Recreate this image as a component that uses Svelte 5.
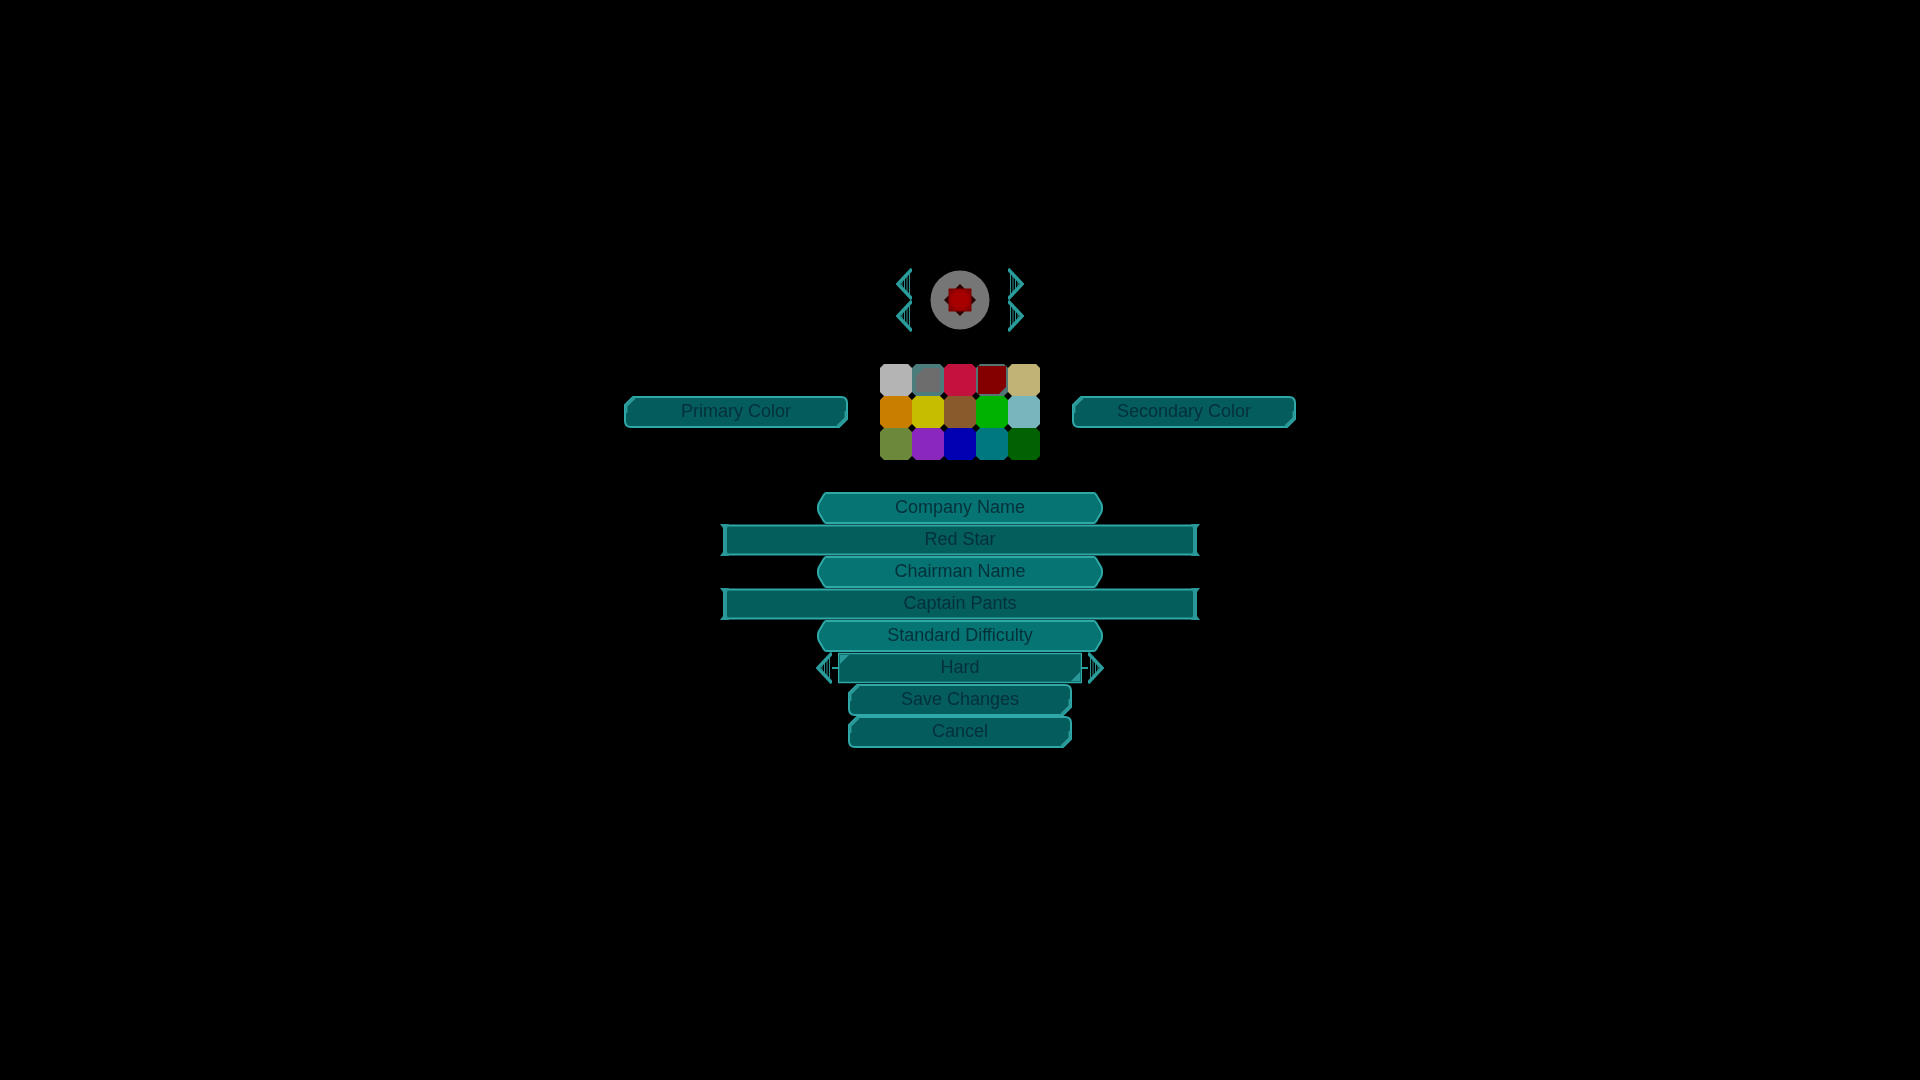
<script>
  const swatches = [
    { c: '#b4b4b4' }, { c: '#6d6d6d', sel: 'a' }, { c: '#c3123e' }, { c: '#840000', sel: 'b' }, { c: '#c0b375' },
    { c: '#c97e00' }, { c: '#c6bd00' }, { c: '#895a2b' }, { c: '#00b200' }, { c: '#78b6be' },
    { c: '#6b883b' }, { c: '#8a27bd' }, { c: '#0000b2' }, { c: '#007880' }, { c: '#006200' }
  ];
  const rows = [
    { kind: 'head', text: 'Company Name' },
    { kind: 'field', text: 'Red Star' },
    { kind: 'head', text: 'Chairman Name' },
    { kind: 'field', text: 'Captain Pants' },
    { kind: 'head', text: 'Standard Difficulty' },
    { kind: 'hard', text: 'Hard' },
    { kind: 'tab', text: 'Save Changes' },
    { kind: 'tab', text: 'Cancel' }
  ];
</script>

{#snippet chevron(dir)}
  <svg class="chev" width="16" height="32" viewBox="0 0 16 32">
    <g transform={dir === 'r' ? 'matrix(-1 0 0 1 16 0)' : undefined}>
      <path class="chev-in" d="M6 14 V18 M8.500 11 V21 M11 8 V24 M13.500 5.500 V26.500" />
      <path class="chev-out" d="M16 1 L2 16 L16 31" />
    </g>
  </svg>
{/snippet}

{#snippet plate(kind)}
  {#if kind === 'tab'}
    <svg class="plate" width="224" height="32" viewBox="0 0 224 32">
      <path class="fill-tab line" d="M1 9 L9 1 H217 Q223 1 223 7 V23 L215 31 H7 Q1 31 1 25 Z" />
      <path class="cap" d="M1 9 L9 1 H13 L3.500 10.500 V17 H1 Z M223 23 L215 31 H211 L220.500 21.500 V15 H223 Z" />
    </svg>
  {:else if kind === 'head'}
    <svg class="plate" width="286" height="32" viewBox="0 0 286 32">
      <path class="fill-head line" d="M9.500 1 H276.500 Q278 1 279 2.500 L284 11 Q285 13 285 15 V17 Q285 19 284 21 L279 29.500 Q278 31 276.500 31 H9.500 Q8 31 7 29.500 L2 21 Q1 19 1 17 V15 Q1 13 2 11 L7 2.500 Q8 1 9.500 1 Z" />
    </svg>
  {:else if kind === 'field'}
    <svg class="plate" width="480" height="32" viewBox="0 0 480 32">
      <path class="fill-field line-thin" d="M5 1.500 H475 V30.500 H5 Z" />
      <path class="cap" d="M0 0 H9 L7 4 V28 L9 32 H0 L3 28 V4 Z M480 0 H471 L473 4 V28 L471 32 H480 L477 28 V4 Z" />
    </svg>
  {:else}
    <svg class="plate" width="244" height="32" viewBox="0 0 244 32">
      <path class="fill-field line-hair" d="M0.500 1.500 H243.500 V30.500 H0.500 Z" />
      <path class="cap" d="M2 3 H11 L2 12 Z M242 29 H233 L242 20 Z" />
    </svg>
  {/if}
{/snippet}

<main class="stage">
  <section class="logo-row">
    <div class="chev-stack">{@render chevron('l')}{@render chevron('l')}</div>
    <svg class="logo" width="60" height="60" viewBox="0 0 60 60">
      <defs>
        <radialGradient id="star" cx="50%" cy="50%" r="60%">
          <stop offset="0.55" stop-color="#a80000" />
          <stop offset="1" stop-color="#7c0000" />
        </radialGradient>
      </defs>
      <circle cx="30" cy="30" r="29.500" fill="#767676" />
      <path d="M30 14 L46 30 L30 46 L14 30 Z" fill="#2a0000" />
      <rect x="18.500" y="18.500" width="23" height="23" fill="url(#star)" />
    </svg>
    <div class="chev-stack">{@render chevron('r')}{@render chevron('r')}</div>
  </section>

  <section class="color-row">
    <div class="btn tab">{@render plate('tab')}<span>Primary Color</span></div>
    <div class="grid">
      {#each swatches as s}
        {#if s.sel}
          <div class="swatch ring {s.sel}">
            <div class="swatch-in {s.sel}" style="background:{s.c}"></div>
          </div>
        {:else}
          <div class="swatch" style="background:{s.c}"></div>
        {/if}
      {/each}
    </div>
    <div class="btn tab">{@render plate('tab')}<span>Secondary Color</span></div>
  </section>

  <section class="stack">
    {#each rows as r}
      {#if r.kind === 'hard'}
        <div class="hard-row">
          {@render chevron('l')}
          <i class="dash"></i>
          <div class="btn hard">{@render plate('hard')}<span>{r.text}</span></div>
          <i class="dash"></i>
          {@render chevron('r')}
        </div>
      {:else}
        <div class="btn {r.kind}">{@render plate(r.kind)}<span>{r.text}</span></div>
      {/if}
    {/each}
  </section>
</main>

<style>
  :global(body) {
    margin: 0;
    background: #000;
  }
  .stage {
    height: 1080px;
    box-sizing: border-box;
    padding-top: 268px;
    display: flex;
    flex-direction: column;
    align-items: center;
    background: #000;
    filter: blur(0.5px);
    font-family: "Liberation Sans", Arial, sans-serif;
    font-size: 18px;
    color: #04303a;
  }
  .logo-row {
    display: flex;
    align-items: center;
    gap: 18px;
    height: 64px;
  }
  .chev-stack {
    display: flex;
    flex-direction: column;
  }
  .chev {
    display: block;
    flex: none;
  }
  .chev-out {
    fill: none;
    stroke: #2a9c9c;
    stroke-width: 3.500;
  }
  .chev-in {
    fill: none;
    stroke: #2a8f8f;
    stroke-width: 1;
  }
  .logo {
    display: block;
  }
  .color-row {
    display: flex;
    align-items: center;
    gap: 32px;
    margin-top: 32px;
  }
  .grid {
    display: grid;
    grid-template-columns: repeat(5, 32px);
    grid-auto-rows: 32px;
  }
  .swatch {
    clip-path: polygon(4px 0, 28px 0, 32px 4px, 32px 28px, 28px 32px, 4px 32px, 0 28px, 0 4px);
  }
  .ring {
    box-sizing: border-box;
  }
  .ring.a {
    background: #4c7c7c;
    padding: 4px;
  }
  .ring.b {
    background: #527676;
    padding: 2px;
  }
  .swatch-in {
    height: 100%;
  }
  .swatch-in.a {
    clip-path: polygon(8px 0, 100% 0, 100% 100%, 0 100%, 0 8px);
  }
  .swatch-in.b {
    clip-path: polygon(0 0, 100% 0, 100% 21px, 21px 100%, 0 100%);
  }
  .stack {
    display: flex;
    flex-direction: column;
    align-items: center;
    margin-top: 32px;
  }
  .btn {
    display: grid;
    place-items: center;
    height: 32px;
  }
  .btn > :global(*) {
    grid-area: 1 / 1;
  }
  .btn span {
    position: relative;
    padding-bottom: 1px;
  }
  .tab { width: 224px; }
  .head { width: 286px; }
  .field { width: 480px; }
  .hard { width: 244px; }
  .plate { display: block; }
  .fill-tab { fill: #045c5c; }
  .fill-head { fill: #067472; }
  .fill-field { fill: #045e5c; }
  .line {
    stroke: #2fa8a8;
    stroke-width: 2;
    stroke-linejoin: round;
  }
  .line-thin {
    stroke: #2fa8a8;
    stroke-width: 2;
  }
  .line-hair {
    stroke: #2fa8a8;
    stroke-width: 1.500;
  }
  .cap { fill: #2a9898; }
  .hard-row {
    display: flex;
    align-items: center;
    width: 288px;
    height: 32px;
  }
  .dash {
    width: 6px;
    height: 1.500px;
    background: #2a9f9f;
  }
</style>
